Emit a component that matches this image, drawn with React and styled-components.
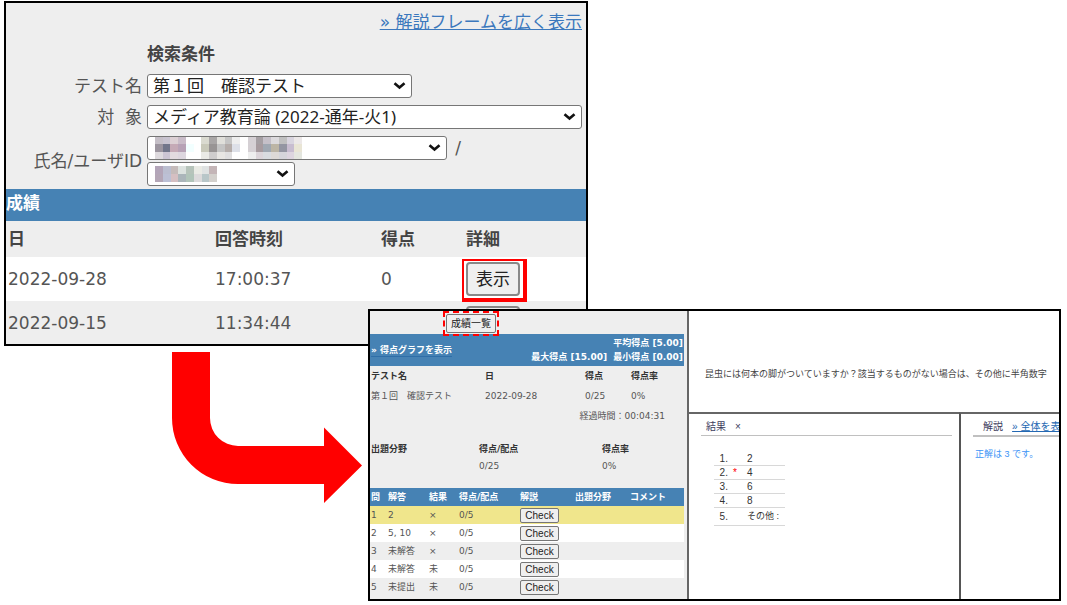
import React, { useState } from "react";
import styled, { createGlobalStyle } from "styled-components";

const GlobalStyle = createGlobalStyle`
  * {
    box-sizing: border-box;
  }
  body {
    margin: 0;
    background-color: #ffffff;
    font-family: "DejaVu Sans", "Noto Sans CJK JP", sans-serif;
    color: #555555;
  }
`;

const Stage = styled.main`
  display: grid;
  grid-template-columns: 364fr 220fr 473fr;
  grid-template-rows: auto 37px auto;
  padding: 1px 6px 4px 4px;
`;

const Panel = styled.section`
  border: 2px solid #000000;
  background-color: #eeeeee;
  overflow: hidden;
  min-width: 0;
`;

const SearchPanel = styled(Panel)`
  grid-column: 1 / 3;
  grid-row: 1 / 3;
`;

const DetailPanel = styled(Panel)`
  grid-column: 2 / 4;
  grid-row: 2 / 4;
  z-index: 1;
  display: grid;
  grid-template-columns: minmax(0, 46fr) minmax(0, 54fr);
  font-size: 9px;
`;

const Arrow = styled.svg`
  grid-column: 1;
  grid-row: 3;
  justify-self: end;
  width: 190px;
  height: 151px;
  margin: 6px 6px 0 0;
`;

const WideLink = styled.div`
  padding-right: 4px;
  text-align: right;
  font-size: 17px;
  line-height: 38px;

  a {
    color: #3b78bd;
  }
`;

const Form = styled.form`
  display: grid;
  grid-template-columns: 136px minmax(0, 1fr);
  column-gap: 5px;
  row-gap: 7px;
  padding: 0 4px 3px 0;
  font-size: 17px;
  line-height: 24px;

  h2 {
    grid-column: 2;
    margin: 0;
    font-size: 17px;
    line-height: 26px;
    color: #444444;
  }

  & > label {
    align-self: center;
    text-align: right;
    white-space: pre;
  }
`;

const Fields = styled.div`
  display: flex;
  flex-wrap: wrap;
  gap: 2px 8px;
`;

const SelectBox = styled.div`
  position: relative;
  width: ${(props) => props.$width};

  select {
    display: block;
    appearance: none;
    width: 100%;
    height: 24px;
    padding: 0 24px 0 5px;
    border: 1px solid #767676;
    border-radius: 3px;
    background-color: #ffffff;
    color: #222222;
    font-family: "Noto Sans", "Noto Sans CJK JP", sans-serif;
    font-size: 17px;
    line-height: 22px;
  }
`;

const Chevron = styled.svg`
  position: absolute;
  right: 6px;
  top: 8px;
  width: 13px;
  height: 8px;
  pointer-events: none;
`;

const Mosaic = styled.svg`
  position: absolute;
  left: 8px;
  top: ${(props) => props.$top};
  pointer-events: none;
`;

const ScoreTable = styled.table`
  width: 100%;
  table-layout: fixed;
  border-collapse: collapse;
  font-size: 17px;
  line-height: 24px;
  text-align: left;

  caption {
    height: 32px;
    padding-bottom: 2px;
    background-color: #4682b4;
    color: #ffffff;
    font-weight: bold;
    line-height: 28px;
    text-align: left;
  }
  th,
  td {
    padding: 0 2px;
  }
  th {
    height: 36px;
    color: #444444;
  }
  td {
    height: 44px;
  }
  tbody tr:last-child td {
    height: 43px;
  }
  tbody tr:nth-child(odd) {
    background-color: #ffffff;
  }
`;

const Button = styled.button`
  display: block;
  padding: 0;
  border: 1px solid #767676;
  border-radius: 2px;
  background-color: #efefef;
  color: #222222;
  font-family: "Liberation Sans", "Noto Sans CJK JP", sans-serif;
  font-size: 10px;
  line-height: 13px;
  cursor: pointer;
`;

const ShowButton = styled(Button)`
  width: 54px;
  height: 34px;
  border-width: 2px;
  border-color: #888888;
  border-radius: 4px;
  font-size: 17px;
`;

const CheckButton = styled(Button)`
  width: 39px;
  height: 15px;
`;

const ListButton = styled(Button)`
  width: 50px;
  height: 19px;
`;

const Marked = styled.div`
  position: relative;
  width: 54px;

  &::after {
    content: "";
    position: absolute;
    inset: -3px -7px -6px -4px;
    border: solid #ff0000;
    border-width: 2px 4px 4px 2px;
    pointer-events: none;
  }
`;

const ListPane = styled.div`
  padding: 0 3px 3px 0;
  line-height: 14px;
`;

const ListBar = styled.div`
  height: 23px;
  padding: 3px 0 0 76px;
`;

const DashMark = styled.div`
  position: relative;
  width: 50px;

  &::after {
    content: "";
    position: absolute;
    inset: -3px;
    border: 2px dashed #ff0000;
    pointer-events: none;
  }
`;

const Summary = styled.div`
  display: flex;
  justify-content: space-between;
  align-items: center;
  height: 32px;
  padding: 0 1px;
  background-color: #4682b4;
  color: #ffffff;
  font-weight: bold;

  a {
    color: #ffffff;
    text-decoration-color: #2f6ea8;
    text-underline-offset: 3px;
  }
  p {
    margin: 0;
    text-align: right;
    white-space: pre;
  }
`;

const InfoTable = styled.table`
  width: 100%;
  table-layout: fixed;
  border-collapse: collapse;
  text-align: left;
  margin-bottom: 14px;

  th,
  td {
    height: ${(props) => props.$row};
    padding: 0 1px;
  }
  th {
    color: #333333;
  }
  .elapsed {
    padding-right: 19px;
    text-align: right;
  }
`;

const AnswerTable = styled.table`
  width: 100%;
  table-layout: fixed;
  border-collapse: collapse;
  text-align: left;

  th,
  td {
    height: 18px;
    padding: 0 1px;
    white-space: nowrap;
  }
  th {
    background-color: #4682b4;
    color: #ffffff;
  }
  tbody tr:nth-child(even) {
    background-color: #ffffff;
  }
  tbody tr.current {
    background-color: #f0e68c;
  }
`;

const QuestionPane = styled.div`
  display: grid;
  grid-template-columns: minmax(0, 73fr) minmax(0, 27fr);
  grid-template-rows: 101px 1fr;
  border-left: 2px solid #666666;
  background-color: #ffffff;
  font-family: "Liberation Sans", "Noto Sans CJK JP", sans-serif;
  color: #444444;
`;

const Question = styled.p`
  grid-column: 1 / 3;
  margin: 0;
  padding: 56px 0 0 16px;
  line-height: 14px;
  white-space: nowrap;
  overflow: hidden;
`;

const Result = styled.div`
  border-top: 2px solid #666666;
  padding: 4px 7px 0 12px;
`;

const Explanation = styled.div`
  border-top: 2px solid #666666;
  border-left: 2px solid #555555;
  padding: 4px 0 0 12px;
  overflow: hidden;

  p {
    margin: 10px 2px;
    color: #3d94f6;
    line-height: 14px;
    white-space: nowrap;
  }
`;

const PaneTitle = styled.h3`
  display: flex;
  gap: 9px;
  margin: 0;
  padding-left: ${(props) => props.$indent};
  border-bottom: ${(props) => props.$line} solid #c0c0c0;
  font-size: 10px;
  font-weight: normal;
  line-height: 17px;
  color: #3c3c5c;
  white-space: nowrap;

  a {
    color: #2468b2;
  }
`;

const Choices = styled.ol`
  width: 71px;
  margin: 16px 0 0 13px;
  padding: 0;
  list-style: none;
  font-size: 10px;
  line-height: 13px;
  color: #333333;

  li {
    display: grid;
    grid-template-columns: 14px 19px 1fr;
    border-bottom: 1px solid #d8d8d8;
  }
  li:last-child {
    line-height: 17px;
  }
  li:last-child span:last-child {
    font-size: 9px;
  }
  span:first-child {
    text-align: right;
  }
  i {
    padding-left: 5px;
    color: #ff0000;
    font-style: normal;
  }
  span:last-child {
    white-space: nowrap;
  }
`;

const nameCells = [
  "#c5bfc7 #c8c3cf #dcd0d4 #c9bcc8 #fff #fff #dadad0 #a9a6a6 #e0dfda #c5c5c5 #eee #fff #d5d0d4 #a59fa3 #c5c0c8 #dcdadd #c0c0c0 #d9d5df #ece8e8",
  "#9c959f #72768a #c5aab6 #b7a2b6 #f2ffff #fff #c9c9ba #989494 #c4c4c4 #b5adaa #dde0e8 #fff #d5d0d4 #a79b9f #a0a8b2 #bcb5a5 #9496a2 #c8bdd0 #e9e5d5",
  "#dedade #ccc5d3 #e2dbdf #ddd7df #fff #fff #eaeae6 #cfcdcd #e8e6e3 #e0dfe0 #fff #fff #eee #dcd5da #d9dce0 #ddd9d6 #d5d5da #ddd5df #e4e6df",
];

const idCells = [
  "#b3a5b9 #bbbed0 #c5bbba #dce2df #b6c3ba #e9eae4 #dfe2e2 #c4b5b7",
  "#b4a6b6 #bcc0d5 #d5bfc2 #abb5ba #b1c4b9 #dcdadb #b8c6c8 #d3d0cc",
];

const answers = [
  { no: 1, answer: "2", result: "×" },
  { no: 2, answer: "5, 10", result: "×" },
  { no: 3, answer: "未解答", result: "×" },
  { no: 4, answer: "未解答", result: "未" },
  { no: 5, answer: "未提出", result: "未" },
];

const choices = ["2", "4", "6", "8", "その他 :"];

// 氏名などを隠すモザイク
const MosaicCells = ({ rows, width, height, top }) => (
  <Mosaic
    $top={top}
    width={width}
    height={height}
    viewBox={`0 0 ${rows[0].split(" ").length} ${rows.length}`}
    preserveAspectRatio="none"
    shapeRendering="crispEdges"
    aria-hidden="true"
  >
    {rows.map((row, y) =>
      row
        .split(" ")
        .map((fill, x) => (
          <rect key={`${x}-${y}`} x={x} y={y} width="1" height="1" fill={fill} />
        ))
    )}
  </Mosaic>
);

const Select = ({ id, width, label, option, children }) => (
  <SelectBox $width={width}>
    <select id={id} aria-label={label}>
      <option>{option}</option>
    </select>
    {children}
    <Chevron viewBox="0 0 13 8" aria-hidden="true">
      <path
        d="M1.5 1.2 L6.5 5.5 L11.5 1.2"
        fill="none"
        stroke="#111"
        strokeWidth="2.6"
      />
    </Chevron>
  </SelectBox>
);

const App = () => {
  const [current, setCurrent] = useState(1);

  return (
    <>
      <GlobalStyle />
      <Stage>
        <SearchPanel>
          <WideLink>
            <a href="#frame">» 解説フレームを広く表示</a>
          </WideLink>
          <Form>
            <h2>検索条件</h2>
            <label htmlFor="test">テスト名</label>
            <Select id="test" width="61%" option="第１回　確認テスト" />
            <label htmlFor="course">{"対  象"}</label>
            <Select
              id="course"
              width="100%"
              option="メディア教育論 (2022-通年-火1)"
            />
            <label htmlFor="name">氏名/ユーザID</label>
            <Fields>
              <Select id="name" width="69%">
                <MosaicCells rows={nameCells} width={147} height={22} top="1px" />
              </Select>
              <span>/</span>
              <Select id="userId" width="34%" label="ユーザID">
                <MosaicCells rows={idCells} width={62} height={16} top="4px" />
              </Select>
            </Fields>
          </Form>

          <ScoreTable>
            <caption>成績</caption>
            <colgroup>
              <col width="207" />
              <col width="166" />
              <col width="85" />
              <col />
            </colgroup>
            <thead>
              <tr>
                <th>日</th>
                <th>回答時刻</th>
                <th>得点</th>
                <th>詳細</th>
              </tr>
            </thead>
            <tbody>
              <tr>
                <td>2022-09-28</td>
                <td>17:00:37</td>
                <td>0</td>
                <td>
                  <Marked>
                    <ShowButton type="button">表示</ShowButton>
                  </Marked>
                </td>
              </tr>
              <tr>
                <td>2022-09-15</td>
                <td>11:34:44</td>
                <td></td>
                <td>
                  <ShowButton type="button" aria-label="表示" />
                </td>
              </tr>
            </tbody>
          </ScoreTable>
        </SearchPanel>

        <Arrow viewBox="0 0 190 151" aria-hidden="true">
          <path
            d="M0 0H38V66A28 28 0 0 0 66 94H152V75.5L190 113.5L152 151V132H66A66 66 0 0 1 0 66Z"
            fill="#ff0000"
          />
        </Arrow>

        <DetailPanel>
          <ListPane>
            <ListBar>
              <DashMark>
                <ListButton type="button">成績一覧</ListButton>
              </DashMark>
            </ListBar>
            <Summary>
              <a href="#graph">» 得点グラフを表示</a>
              <p>{"平均得点 [5.00]\n最大得点 [15.00]  最小得点 [0.00]"}</p>
            </Summary>

            <InfoTable $row="20px">
              <colgroup>
                <col width="114" />
                <col width="100" />
                <col width="46" />
                <col />
              </colgroup>
              <thead>
                <tr>
                  <th>テスト名</th>
                  <th>日</th>
                  <th>得点</th>
                  <th>得点率</th>
                </tr>
              </thead>
              <tbody>
                <tr>
                  <td>第１回　確認テスト</td>
                  <td>2022-09-28</td>
                  <td>0/25</td>
                  <td>0%</td>
                </tr>
                <tr>
                  <td className="elapsed" colSpan="4">
                    経過時間：00:04:31
                  </td>
                </tr>
              </tbody>
            </InfoTable>

            <InfoTable $row="17px">
              <colgroup>
                <col width="108" />
                <col width="123" />
                <col />
              </colgroup>
              <thead>
                <tr>
                  <th>出題分野</th>
                  <th>得点/配点</th>
                  <th>得点率</th>
                </tr>
              </thead>
              <tbody>
                <tr>
                  <td></td>
                  <td>0/25</td>
                  <td>0%</td>
                </tr>
              </tbody>
            </InfoTable>

            <AnswerTable>
              <colgroup>
                <col width="17" />
                <col width="41" />
                <col width="30" />
                <col width="61" />
                <col width="55" />
                <col width="55" />
                <col />
              </colgroup>
              <thead>
                <tr>
                  <th>問</th>
                  <th>解答</th>
                  <th>結果</th>
                  <th>得点/配点</th>
                  <th>解説</th>
                  <th>出題分野</th>
                  <th>コメント</th>
                </tr>
              </thead>
              <tbody>
                {answers.map(({ no, answer, result }) => (
                  <tr key={no} className={no === current ? "current" : ""}>
                    <td>{no}</td>
                    <td>{answer}</td>
                    <td>{result}</td>
                    <td>0/5</td>
                    <td>
                      <CheckButton type="button" onClick={() => setCurrent(no)}>
                        Check
                      </CheckButton>
                    </td>
                    <td></td>
                    <td></td>
                  </tr>
                ))}
              </tbody>
            </AnswerTable>
          </ListPane>

          <QuestionPane>
            <Question>
              昆虫には何本の脚がついていますか？該当するものがない場合は、その他に半角数字
            </Question>
            <Result>
              <PaneTitle $indent="5px" $line="1px">
                結果 <span>×</span>
              </PaneTitle>
              <Choices>
                {choices.map((choice, i) => (
                  <li key={choice}>
                    <span>{i + 1}.</span>
                    <i>{i === 1 ? "*" : ""}</i>
                    <span>{choice}</span>
                  </li>
                ))}
              </Choices>
            </Result>
            <Explanation>
              <PaneTitle $indent="10px" $line="2px">
                解説 <a href="#all">» 全体を表示</a>
              </PaneTitle>
              <p>正解は 3 です。</p>
            </Explanation>
          </QuestionPane>
        </DetailPanel>
      </Stage>
    </>
  );
};

export default App;
